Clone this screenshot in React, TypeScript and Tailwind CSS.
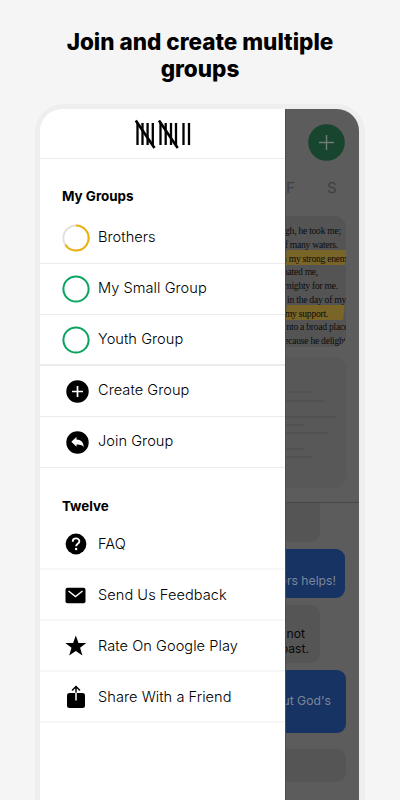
import React from "react";

const verses = [
  { text: "igh, he took me;", cls: "mr-[5px]" },
  { text: "of many waters.", cls: "mr-[8px]" },
  { text: "n my strong enem", cls: "-mr-[1px]", mark: "w-full" },
  { text: "hated me,", cls: "mr-[28px]" },
  { text: "mighty for me.", cls: "mr-[8px]" },
  { text: "e in the day of my", cls: "mr-0" },
  { text: "my support.", cls: "mr-[18px]", mark: "w-[58px]" },
  { text: "into a broad place", cls: "-mr-[2px]" },
  { text: "ecause he delight", cls: "mr-0" },
];

const sketch = [
  { w: "w-[25px]", gap: "mt-[34px]" },
  { w: "w-[39px]", gap: "mt-[7px]" },
  { w: "w-[50px]", gap: "mt-[14px]" },
  { w: "w-[18px]", gap: "mt-[6px]" },
  { w: "w-[43px]", gap: "mt-[6px]" },
  { w: "w-[18px]", gap: "mt-[14px]" },
  { w: "w-[26px]", gap: "mt-[6px]" },
];

function Ring({ partial = false }: { partial?: boolean }) {
  return (
    <svg width="28" height="28" viewBox="0 0 28 28" fill="none" strokeWidth="2">
      <circle cx="14" cy="14" r="12.6" stroke={partial ? "#e3e1dc" : "#0ba360"} />
      {partial && <path d="M14 1.4A12.6 12.6 0 1 1 3.4 20.8" stroke="#ecb20b" />}
    </svg>
  );
}

function Row({ icon, label, cls, nudge = "-mt-[2px]" }: { icon: React.ReactNode; label: string; cls: string; nudge?: string }) {
  return (
    <div className={"flex items-center box-border " + cls}>
      <div className="w-[58px] shrink-0 flex">{icon}</div>
      <span className={"text-[14.6px] leading-5 font-light text-black whitespace-nowrap tracking-[0.04px] " + nudge}>{label}</span>
    </div>
  );
}

function Tally() {
  return (
    <svg width="56" height="30" viewBox="0 0 56 30" stroke="#000" strokeWidth="2.3" fill="none" className="ml-[95px]">
      <path d="M2.500 4V26M7.500 4V26M12.600 4V26M17.800 4V26M25.500 4V26M30.700 4V26M36 4V26M41 4V26M48.500 4V26M54 4V26" />
      <path d="M.8 1.500L19.500 29M24 1.500L42.700 29" strokeWidth="2.600" />
    </svg>
  );
}

const plusIcon = (
  <svg className="ml-[26px]" width="23" height="23" viewBox="0 0 23 23">
    <circle cx="11.5" cy="11.5" r="11.2" />
    <path d="M11.5 6v11M6 11.5h11" stroke="#fff" strokeWidth="1.7" />
  </svg>
);
const joinIcon = (
  <svg className="ml-[26px]" width="23" height="23" viewBox="0 0 23 23">
    <circle cx="11.5" cy="11.5" r="11.2" />
    <path d="M5.300 10.700L10.500 5.900v2.700c4.600.2 7 2.500 7.200 7.400-1.700-2-3.700-2.600-7.200-2.500v2.300z" fill="#fff" />
  </svg>
);
const faqIcon = (
  <svg className="ml-[25px]" width="22" height="22" viewBox="0 0 22 22">
    <circle cx="11" cy="11" r="10.4" />
    <path d="M7.700 8.700c0-4.400 6.700-4.200 6.700-.4 0 2.500-3.300 2.400-3.300 5" fill="none" stroke="#fff" strokeWidth="1.800" />
    <circle cx="11.100" cy="16" r="1.250" fill="#fff" />
  </svg>
);
const mailIcon = (
  <svg className="ml-[25px] mt-[2px]" width="21" height="17" viewBox="0 0 21 17">
    <rect x=".5" y=".8" width="20" height="15.500" rx="2" />
    <path d="M3.500 4L10.500 9.500L17.500 4" fill="none" stroke="#fff" strokeWidth="1.400" />
  </svg>
);
const starIcon = (
  <svg className="ml-[24px]" width="24" height="22" viewBox="0 0 24 22">
    <path d="M11.800.6L14.500 8H22.300L16.100 12.700L18.400 20.400L11.800 15.900L5.200 20.400L7.500 12.700L1.300 8H9.100Z" />
  </svg>
);
const shareIcon = (
  <svg className="ml-[26px]" width="20" height="24" viewBox="0 0 20 24">
    <rect x="1" y="8" width="18" height="15" rx="2.500" />
    <path d="M10 9V2M6 5.500L10 1.500L14 5.500" fill="none" stroke="#000" strokeWidth="1.500" />
    <path d="M10 7.500V15.500" stroke="#fff" strokeWidth="1.500" />
  </svg>
);

function Drawer() {
  return (
    <div className="w-[245px] shrink-0 bg-white h-full">
      <div className="h-[50px] border-b border-[#ebebeb] pt-[10px]"><Tally /></div>
      <h2 className="mt-[27px] pl-[22px] h-5 text-[13.4px] leading-5 font-bold">My Groups</h2>
      <Row icon={<span className="ml-[22px] mt-px"><Ring partial /></span>} label="Brothers" cls="h-[58px] pt-[6px] border-b border-[#ebebeb]" nudge="-mt-px" />
      <Row icon={<span className="ml-[22px]"><Ring /></span>} label="My Small Group" cls="h-[51px] border-b border-[#ebebeb]" />
      <Row icon={<span className="ml-[22px] mt-px"><Ring /></span>} label="Youth Group" cls="h-[51px] border-b-2 border-[#ebebeb]" nudge="-mt-px" />
      <Row icon={plusIcon} label="Create Group" cls="h-[51px] border-b border-[#ebebeb]" />
      <Row icon={joinIcon} label="Join Group" cls="h-[51px] border-b border-[#ebebeb]" />
      <h2 className="mt-[28px] pl-[22px] h-5 text-[13.4px] leading-5 font-bold">Twelve</h2>
      <Row icon={faqIcon} label="FAQ" cls="h-[54px] pt-[4px] border-b-2 border-[#f6f6f6]" nudge="mt-0" />
      <Row icon={mailIcon} label="Send Us Feedback" cls="h-[51px] border-b-2 border-[#f6f6f6]" nudge="mt-px" />
      <Row icon={starIcon} label="Rate On Google Play" cls="h-[51px] border-b-2 border-[#f6f6f6]" nudge="mt-0" />
      <Row icon={shareIcon} label="Share With a Friend" cls="h-[51px] border-b-2 border-[#f6f6f6]" nudge="mt-0" />
    </div>
  );
}

function Backdrop() {
  return (
    <div className="w-[74px] shrink-0 h-full overflow-hidden bg-[#5c5c5c] border-l border-[#4d4d4d] flex flex-col">
      <div className="h-[66px] shrink-0 pt-[15px] pl-[22px]">
        <svg width="37" height="37" viewBox="0 0 37 37">
          <circle cx="18.500" cy="18.500" r="18.300" fill="#17452d" />
          <path d="M18.500 11V26M11 18.500H26" stroke="#6f7b74" strokeWidth="1.500" />
        </svg>
      </div>
      <div className="h-[41px] shrink-0 flex pt-[3px] text-[15px] leading-5 text-[#404040] font-normal">
        <span className="w-[41px]">F</span><span>S</span>
      </div>
      <div className="h-[131px] w-[60px] shrink-0 rounded-r-[12px] overflow-hidden bg-[#545454] pt-[7px]">
        {verses.map((v) => (
          <div key={v.text} className="h-[13.75px] relative flex justify-end whitespace-nowrap">
            {v.mark && <div className={"absolute left-0 -top-[1px] h-[15px] -skew-x-6 bg-[#786527] " + v.mark} />}
            <span className={"relative font-['Liberation_Serif',serif] text-[9.6px] leading-[15px] tracking-[-0.25px] text-[#0c0c0c] " + v.cls}>{v.text}</span>
          </div>
        ))}
      </div>
      <div className="h-[131px] w-[60px] shrink-0 mt-[10px] rounded-r-[12px] bg-[#585858] overflow-hidden">
        {sketch.map((s, i) => <div key={i} className={"h-[2px] bg-[#525252] " + s.w + " " + s.gap} />)}
      </div>
      <div className="h-[15px] shrink-0 border-b border-[#474747]" />
      <div className="h-[39px] w-[34px] shrink-0 rounded-br-[10px] bg-[#555]" />
      <div className="h-[49px] w-[59px] shrink-0 mt-[7px] rounded-r-[9px] bg-[#163364] flex justify-end pt-[22px] pr-[9px] text-[12.2px] leading-5 text-[#7c8698] whitespace-nowrap overflow-hidden">ers helps!</div>
      <div className="h-[58px] w-[34px] shrink-0 mt-[7px] rounded-r-[10px] bg-[#555] pt-[22px] text-[12.2px] leading-[14.5px] text-[#090909] overflow-hidden">
        <div className="flex justify-end pr-[15px] whitespace-nowrap">not</div>
        <div className="flex justify-end pr-[11px] whitespace-nowrap">past.</div>
      </div>
      <div className="h-[63px] w-[60px] shrink-0 mt-[7px] rounded-r-[9px] bg-[#163364] flex justify-end pt-[21px] pr-[15px] text-[12.2px] leading-5 text-[#7c8698] whitespace-nowrap overflow-hidden">ut God's</div>
      <div className="h-[33px] w-[60px] shrink-0 mt-[16px] rounded-r-[10px] bg-[#555]" />
    </div>
  );
}

export default function App() {
  return (
    <div className="w-[400px] h-[800px] overflow-hidden bg-[#f5f5f5] font-['Inter',sans-serif] text-black">
      <h1 className="h-[104px] pt-[28px] text-center text-[22.5px] leading-[27px] font-extrabold">
        Join and create multiple<br />groups
      </h1>
      <div className="ml-[35px] w-[330px] h-[696px] rounded-t-[28px] bg-[#eeeeee] pt-[5px] pl-[5px]">
        <div className="w-[319px] h-[691px] rounded-t-[22px] overflow-hidden flex">
          <Drawer />
          <Backdrop />
        </div>
      </div>
    </div>
  );
}
